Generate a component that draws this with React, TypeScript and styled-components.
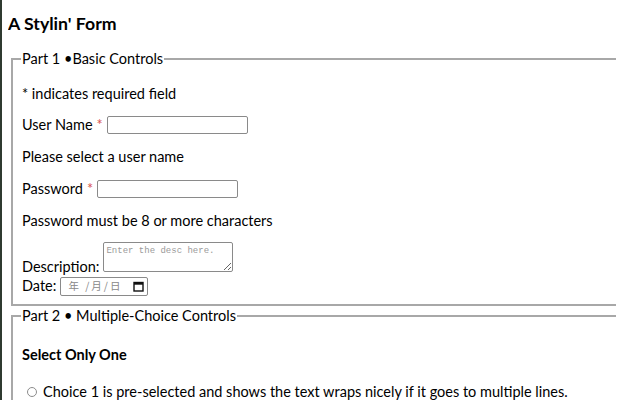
import styled, { createGlobalStyle } from "styled-components";

const GlobalStyle = createGlobalStyle`
  html {
    box-shadow: inset 2px 0 #2f3a30;
    background: #fff;
  }
  body {
    margin: 8px;
    overflow: hidden;
    font-family: Lato, "Noto Sans", sans-serif;
    font-size: 14.5px;
    color: #000;
  }
`;

const Title = styled.h1`
  font-size: 17.7px;
  font-weight: 700;
  margin: 4px 0 13px;
  line-height: 24px;
`;

const FieldSet = styled.fieldset`
  margin: 0 2px 0 3px;
  border: 2px solid #a8a8a8;
  padding: 2px 10px 8px 9px;
  min-width: 680px;
`;

const Legend = styled.legend`
  padding: 0 1px;
  margin-left: -1px;
  font-size: 14.5px;
  line-height: 20px;
`;

const Text = styled.p<{ $bold?: boolean; $gap?: number }>`
  margin: ${(p) => p.$gap ?? 12}px 0 0;
  line-height: 20px;
  font-weight: ${(p) => (p.$bold ? 700 : 400)};
`;

const Row = styled.div<{ $gap?: number }>`
  display: flex;
  align-items: center;
  margin-top: ${(p) => p.$gap ?? 11}px;
  line-height: 20px;
`;

const Required = styled.span`
  color: #d9534f;
  margin: 0 4px 0 4px;
`;

const TextInput = styled.input`
  width: 141px;
  height: 18px;
  box-sizing: border-box;
  border: 1px solid #8a8a8a;
  border-radius: 2px;
  padding: 0 3px;
  font-size: 13px;
`;

const DescRow = styled.div`
  margin-top: 11px;
  line-height: 18px;
`;

const TextArea = styled.textarea`
  width: 130px;
  height: 30px;
  box-sizing: border-box;
  margin: 0 0 0 4px;
  vertical-align: baseline;
  border: 1px solid #8a8a8a;
  border-radius: 2px;
  padding: 2px 2px;
  font-family: "Liberation Mono", monospace;
  font-size: 9px;
  line-height: 12px;
  resize: both;
  &::placeholder {
    color: #9a9a9a;
  }
`;

const DateRow = styled.div`
  display: flex;
  align-items: center;
  line-height: 20px;
`;

const DateBox = styled.span`
  display: inline-flex;
  align-items: center;
  justify-content: space-between;
  width: 88px;
  height: 19px;
  box-sizing: border-box;
  margin-left: 4px;
  padding: 0 3px 0 7px;
  border: 1px solid #8a8a8a;
  border-radius: 2px;
  font-family: "Noto Sans CJK SC", sans-serif;
  font-size: 10.5px;
  color: #888;
  letter-spacing: 2px;
`;

const ChoiceRow = styled.label`
  display: flex;
  align-items: center;
  margin-top: 17px;
  padding-left: 5px;
  line-height: 20px;
`;

const Radio = styled.input`
  appearance: none;
  width: 10px;
  height: 10px;
  margin: 0 6px 0 0;
  border: 1px solid #8c8c8c;
  border-radius: 50%;
  background: #fff;
`;

function CalendarIcon() {
  return (
    <svg width="11" height="11" viewBox="0 0 11 11">
      <rect x="1" y="1.5" width="9" height="8.5" fill="none" stroke="#111" strokeWidth="1.4" />
      <rect x="1" y="1.5" width="9" height="2.2" fill="#111" />
    </svg>
  );
}

export default function App() {
  return (
    <>
      <GlobalStyle />
      <Title>A Stylin' Form</Title>
      <form>
        <FieldSet>
          <Legend>Part 1 •Basic Controls</Legend>
          <Text $gap={13}>* indicates required field</Text>
          <Row>
            User Name<Required>*</Required>
            <TextInput type="text" />
          </Row>
          <Text>Please select a user name</Text>
          <Row $gap={12}>
            Password<Required>*</Required>
            <TextInput type="password" />
          </Row>
          <Text>Password must be 8 or more characters</Text>
          <DescRow>
            Description:
            <TextArea placeholder="Enter the desc here." />
          </DescRow>
          <DateRow>
            Date:
            <DateBox>
              <span>年 /月/日</span>
              <CalendarIcon />
            </DateBox>
          </DateRow>
        </FieldSet>
        <FieldSet>
          <Legend>Part 2 • Multiple-Choice Controls</Legend>
          <Text $bold $gap={17}>
            Select Only One
          </Text>
          <ChoiceRow>
            <Radio type="radio" name="choice" />
            Choice 1 is pre-selected and shows the text wraps nicely if it goes to multiple lines.
          </ChoiceRow>
        </FieldSet>
      </form>
    </>
  );
}
